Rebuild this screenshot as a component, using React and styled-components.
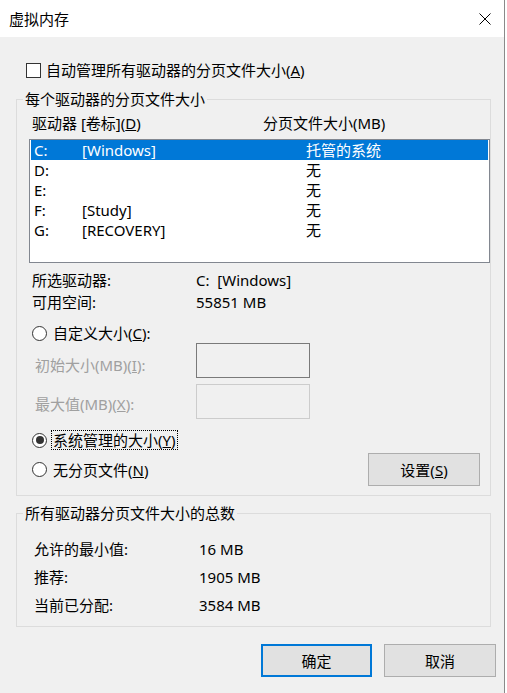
import React from 'react'
import styled, { createGlobalStyle } from 'styled-components'

const GlobalStyle = createGlobalStyle`
  html, body {
    margin: 0;
    padding: 0;
    background: #ffffff;
  }
  body {
    font-family: "Noto Sans", "Noto Sans CJK SC", sans-serif;
    font-size: 15px;
    color: #000000;
    -webkit-font-smoothing: antialiased;
  }
`

const drives = [
  { letter: 'C:', label: '[Windows]', size: '托管的系统' },
  { letter: 'D:', label: '', size: '无' },
  { letter: 'E:', label: '', size: '无' },
  { letter: 'F:', label: '[Study]', size: '无' },
  { letter: 'G:', label: '[RECOVERY]', size: '无' },
]

const totals = [
  { label: '允许的最小值:', value: '16 MB' },
  { label: '推荐:', value: '1905 MB' },
  { label: '当前已分配:', value: '3584 MB' },
]

const CloseIcon = () => (
  <svg width='12' height='12' viewBox='0 0 12 12'>
    <path d='M0.5 0.5 L11.5 11.5 M11.5 0.5 L0.5 11.5' stroke='#000' strokeWidth='1' fill='none' />
  </svg>
)

const Radio = ({ checked }) => (
  <RadioCircle>{checked && <RadioDot />}</RadioCircle>
)

export const App = () => {
  return (
    <Window>
      <GlobalStyle />
      <TitleBar>
        <Title>虚拟内存</Title>
        <CloseButton><CloseIcon /></CloseButton>
      </TitleBar>
      <Content>
        <CheckRow>
          <CheckBox />
          <span>自动管理所有驱动器的分页文件大小(<u>A</u>)</span>
        </CheckRow>

        <Group $height={397} $top={19}>
          <Legend>每个驱动器的分页文件大小</Legend>
          <HeaderRow>
            <HeaderCell>驱动器 [卷标](<u>D</u>)</HeaderCell>
            <span>分页文件大小(MB)</span>
          </HeaderRow>
          <ListBox>
            {drives.map((d, i) => (
              <DriveRow key={d.letter} $selected={i === 0}>
                <LetterCell>{d.letter}</LetterCell>
                <LabelCell>{d.label}</LabelCell>
                <span>{d.size}</span>
              </DriveRow>
            ))}
          </ListBox>

          <InfoRow $top={6}>
            <InfoLabel>所选驱动器:</InfoLabel>
            <InfoValue>C:  [Windows]</InfoValue>
          </InfoRow>
          <InfoRow>
            <InfoLabel>可用空间:</InfoLabel>
            <InfoValue>55851 MB</InfoValue>
          </InfoRow>

          <RadioRow $top={10}>
            <Radio />
            <RadioText>自定义大小(<u>C</u>):</RadioText>
          </RadioRow>
          <FieldRow $top={0} $pad={12}>
            <FieldLabel>初始大小(MB)(<u>I</u>):</FieldLabel>
            <FieldBox $active />
          </FieldRow>
          <FieldRow $top={6} $pad={10}>
            <FieldLabel>最大值(MB)(<u>X</u>):</FieldLabel>
            <FieldBox />
          </FieldRow>
          <RadioRow $top={11}>
            <Radio checked />
            <RadioText $focused>系统管理的大小(<u>Y</u>)</RadioText>
          </RadioRow>
          <RadioRow $top={3} $height={33}>
            <Radio />
            <RadioText>无分页文件(<u>N</u>)</RadioText>
            <SetButton>设置(<u>S</u>)</SetButton>
          </RadioRow>
        </Group>

        <Group $height={114} $top={17}>
          <Legend>所有驱动器分页文件大小的总数</Legend>
          <TotalList>
            {totals.map(t => (
              <TotalRow key={t.label}>
                <TotalLabel>{t.label}</TotalLabel>
                <span>{t.value}</span>
              </TotalRow>
            ))}
          </TotalList>
        </Group>

        <ButtonRow>
          <DialogButton $default>确定</DialogButton>
          <DialogButton>取消</DialogButton>
        </ButtonRow>
      </Content>
    </Window>
  )
}

const Window = styled.div`
  width: 505px;
  height: 693px;
  background: #f0f0f0;
  border-right: 1px solid #8a8a8a;
  box-sizing: border-box;
  overflow: hidden;
`
const TitleBar = styled.div`
  height: 37px;
  background: #ffffff;
  display: flex;
  align-items: center;
  justify-content: space-between;
  padding-left: 9px;
`
const Title = styled.div`
  font-size: 15px;
  line-height: 20px;
`
const CloseButton = styled.div`
  width: 12px;
  height: 12px;
  margin-right: 13px;
  display: flex;
  & svg {
    display: block;
  }
`
const Content = styled.div`
  padding-left: 16px;
`
const CheckRow = styled.div`
  margin-top: 23px;
  height: 20px;
  display: flex;
  align-items: center;
  gap: 5px;
  padding-left: 10px;
  line-height: 20px;
`
const CheckBox = styled.div`
  width: 15px;
  height: 15px;
  box-sizing: border-box;
  border: 1px solid #333333;
  background: #ffffff;
`
const Group = styled.div`
  margin-top: ${props => props.$top}px;
  width: 475px;
  height: ${props => props.$height}px;
  box-sizing: border-box;
  border: 1px solid #dcdcdc;
  display: flex;
  flex-direction: column;
`
const Legend = styled.div`
  margin-top: -11px;
  margin-left: 6px;
  padding: 0 2px;
  align-self: flex-start;
  background: #f0f0f0;
  line-height: 20px;
  height: 20px;
`
const HeaderRow = styled.div`
  margin-top: 4px;
  height: 20px;
  line-height: 20px;
  display: flex;
  padding-left: 15px;
`
const HeaderCell = styled.span`
  width: 231px;
`
const ListBox = styled.div`
  margin-top: 6px;
  margin-left: 12px;
  width: 461px;
  height: 124px;
  box-sizing: border-box;
  border: 1px solid #828790;
  background: #ffffff;
  padding: 0 1px;
`
const DriveRow = styled.div`
  height: 20px;
  line-height: 20px;
  display: flex;
  padding-left: 3px;
  background: ${props => props.$selected ? '#0078d7' : 'transparent'};
  color: ${props => props.$selected ? '#ffffff' : '#000000'};
`
const LetterCell = styled.span`
  width: 48px;
`
const LabelCell = styled.span`
  width: 224px;
`
const InfoRow = styled.div`
  margin-top: ${props => props.$top || 0}px;
  height: 22px;
  line-height: 22px;
  display: flex;
  padding-left: 15px;
`
const InfoLabel = styled.span`
  width: 164px;
`
const InfoValue = styled.span`
  white-space: pre;
`
const RadioRow = styled.div`
  margin-top: ${props => props.$top}px;
  height: ${props => props.$height || 20}px;
  display: flex;
  align-items: center;
  gap: 4px;
  padding-left: 15px;
  line-height: 18px;
`
const RadioCircle = styled.div`
  width: 15px;
  height: 15px;
  box-sizing: border-box;
  border: 1px solid #333333;
  border-radius: 50%;
  background: #ffffff;
  display: flex;
  align-items: center;
  justify-content: center;
  flex-shrink: 0;
`
const RadioDot = styled.div`
  width: 8px;
  height: 8px;
  border-radius: 50%;
  background: #333333;
`
const RadioText = styled.span`
  padding: 0 1px;
  border: 1px dotted ${props => props.$focused ? '#000000' : 'transparent'};
`
const FieldRow = styled.div`
  margin-top: ${props => props.$top}px;
  height: 35px;
  display: flex;
  align-items: flex-start;
  padding-left: 18px;
  & > span {
    padding-top: ${props => props.$pad}px;
  }
`
const FieldLabel = styled.span`
  width: 161px;
  line-height: 20px;
  color: #a0a0a0;
`
const FieldBox = styled.div`
  width: 114px;
  height: 35px;
  box-sizing: border-box;
  border: 1px solid ${props => props.$active ? '#7a7a7a' : '#cccccc'};
  background: #f0f0f0;
`
const SetButton = styled.div`
  margin-left: auto;
  margin-right: 10px;
  width: 112px;
  height: 33px;
  box-sizing: border-box;
  border: 1px solid #adadad;
  background: #e1e1e1;
  display: flex;
  align-items: center;
  justify-content: center;
`
const TotalList = styled.div`
  margin-top: 12px;
  padding-left: 17px;
`
const TotalRow = styled.div`
  height: 28px;
  line-height: 28px;
  display: flex;
`
const TotalLabel = styled.span`
  width: 165px;
`
const ButtonRow = styled.div`
  margin-top: 17px;
  width: 480px;
  display: flex;
  justify-content: flex-end;
  gap: 12px;
`
const DialogButton = styled.div`
  width: ${props => props.$default ? 111 : 112}px;
  height: 33px;
  box-sizing: border-box;
  border: ${props => props.$default ? '2px solid #0078d7' : '1px solid #adadad'};
  background: #e1e1e1;
  display: flex;
  align-items: center;
  justify-content: center;
`

export default App
